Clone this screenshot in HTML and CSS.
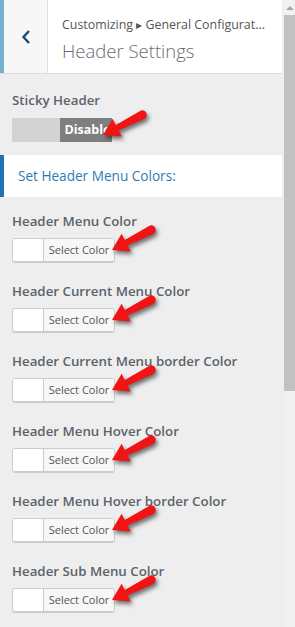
FILE: index.html
```html
<!DOCTYPE html>
<html lang="en">
<head>
    <meta charset="UTF-8">
    <title>Header Settings</title>
    <link rel="stylesheet" href="styles.css">
</head>
<body>
    <div class="panel">
        <div class="panel-head">
            <button class="back" aria-label="Back">
                <svg width="10" height="14" viewBox="0 0 10 14"><polyline points="8,1 2.5,7 8,13" fill="none" stroke="#0e4f7c" stroke-width="2.4"/></svg>
            </button>
            <div class="head-titles">
                <div class="crumb">Customizing &#9656; General Configurat...</div>
                <div class="head-title">Header Settings</div>
            </div>
        </div>

        <div class="control">
            <div class="control-title">Sticky Header</div>
            <div class="row">
                <div class="toggle">
                    <span class="toggle-off"></span>
                    <span class="toggle-on">Disable</span>
                </div>
                <svg class="arrow arrow-sticky" width="52" height="40" viewBox="0 0 52 40"><path d="M3,27 L12.6,10.8 L15.8,17 L40.1,2.9 A4.5,4.5 0 0 1 44.3,10.9 L18.6,22.4 L21.8,28.6 Z"/></svg>
            </div>
        </div>

        <div class="section-title">Set Header Menu Colors:</div>

        <div class="colors">
            <div class="control">
                <div class="control-title">Header Menu Color</div>
                <div class="row">
                    <div class="color-picker"><span class="swatch"></span><span class="select">Select Color</span></div>
                    <svg class="arrow" width="52" height="40" viewBox="0 0 52 40"><path d="M3,27 L12.6,10.8 L15.8,17 L40.1,2.9 A4.5,4.5 0 0 1 44.3,10.9 L18.6,22.4 L21.8,28.6 Z"/></svg>
                </div>
            </div>
            <div class="control">
                <div class="control-title">Header Current Menu Color</div>
                <div class="row">
                    <div class="color-picker"><span class="swatch"></span><span class="select">Select Color</span></div>
                    <svg class="arrow" width="52" height="40" viewBox="0 0 52 40"><path d="M3,27 L12.6,10.8 L15.8,17 L40.1,2.9 A4.5,4.5 0 0 1 44.3,10.9 L18.6,22.4 L21.8,28.6 Z"/></svg>
                </div>
            </div>
            <div class="control">
                <div class="control-title">Header Current Menu border Color</div>
                <div class="row">
                    <div class="color-picker"><span class="swatch"></span><span class="select">Select Color</span></div>
                    <svg class="arrow" width="52" height="40" viewBox="0 0 52 40"><path d="M3,27 L12.6,10.8 L15.8,17 L40.1,2.9 A4.5,4.5 0 0 1 44.3,10.9 L18.6,22.4 L21.8,28.6 Z"/></svg>
                </div>
            </div>
            <div class="control">
                <div class="control-title">Header Menu Hover Color</div>
                <div class="row">
                    <div class="color-picker"><span class="swatch"></span><span class="select">Select Color</span></div>
                    <svg class="arrow" width="52" height="40" viewBox="0 0 52 40"><path d="M3,27 L12.6,10.8 L15.8,17 L40.1,2.9 A4.5,4.5 0 0 1 44.3,10.9 L18.6,22.4 L21.8,28.6 Z"/></svg>
                </div>
            </div>
            <div class="control">
                <div class="control-title">Header Menu Hover border Color</div>
                <div class="row">
                    <div class="color-picker"><span class="swatch"></span><span class="select">Select Color</span></div>
                    <svg class="arrow" width="52" height="40" viewBox="0 0 52 40"><path d="M3,27 L12.6,10.8 L15.8,17 L40.1,2.9 A4.5,4.5 0 0 1 44.3,10.9 L18.6,22.4 L21.8,28.6 Z"/></svg>
                </div>
            </div>
            <div class="control">
                <div class="control-title">Header Sub Menu Color</div>
                <div class="row">
                    <div class="color-picker"><span class="swatch"></span><span class="select">Select Color</span></div>
                    <svg class="arrow" width="52" height="40" viewBox="0 0 52 40"><path d="M3,27 L12.6,10.8 L15.8,17 L40.1,2.9 A4.5,4.5 0 0 1 44.3,10.9 L18.6,22.4 L21.8,28.6 Z"/></svg>
                </div>
            </div>
        </div>
    </div>

    <div class="scrollbar">
        <div class="sb-up"><span class="sb-tri"></span></div>
        <div class="sb-thumb"></div>
    </div>
</body>
</html>
```

FILE: styles.css
```css
body {
    font-family: "Open Sans", "Noto Sans", Arial, sans-serif;
    background-color: #eeeeee;
    margin: 0;
    padding: 0;
    display: flex;
    height: 627px;
    overflow: hidden;
}

.panel {
    width: 282px;
    margin-right: 1px;
}

.panel-head {
    display: flex;
    height: 73px;
    background: white;
    border-bottom: 1px solid #dddddd;
}

.back {
    width: 48px;
    padding: 0;
    border: none;
    border-left: 4px solid #78afd1;
    border-right: 1px solid #dddddd;
    background-color: #f7f7f7;
    display: flex;
    align-items: center;
    justify-content: center;
}

.head-titles {
    padding: 15px 0 0 14px;
    min-width: 0;
    flex: 1;
}

.crumb {
    font-size: 12.4px;
    line-height: 20px;
    color: #555555;
    white-space: nowrap;
}

.head-title {
    font-size: 18.5px;
    font-weight: 300;
    line-height: 28px;
    color: #666d74;
    margin-top: 2px;
}

.control {
    padding: 16px 12px 0;
}

.colors .control {
    padding-top: 0;
    margin-bottom: 19px;
}

.colors {
    padding-top: 14px;
}

.control-title {
    font-size: 13.3px;
    font-weight: 600;
    line-height: 21px;
    color: #5b636b;
    margin-bottom: 6px;
}

.row {
    position: relative;
    display: flex;
}

.toggle {
    display: flex;
    width: 100px;
    height: 24px;
    margin-top: 1px;
    overflow: hidden;
}

.toggle-off {
    width: 50px;
    background-color: #d3d3d3;
}

.toggle-on {
    width: 50px;
    background-color: #7f7f7f;
    color: white;
    font-size: 12.5px;
    font-weight: 700;
    line-height: 24px;
    padding-left: 5px;
    white-space: nowrap;
}

.section-title {
    margin-top: 13px;
    background: white;
    border-left: 4px solid #2271b1;
    height: 42px;
    line-height: 42px;
    padding-left: 14px;
    font-size: 13.6px;
    color: #2e7bb4;
}

.color-picker {
    display: flex;
    width: 101px;
    height: 22px;
    border: 1px solid #cccccc;
    border-radius: 3px;
    box-shadow: 0 1px 0 #cccccc;
    overflow: hidden;
}

.swatch {
    width: 30px;
    background: white;
    border-right: 1px solid #cccccc;
}

.select {
    flex: 1;
    background-color: #f7f7f7;
    font-size: 11px;
    line-height: 22px;
    color: #555555;
    text-align: center;
}

.arrow {
    position: absolute;
    left: 97px;
    top: -15px;
    overflow: visible;
    filter: drop-shadow(2px 3px 2px rgba(0, 0, 0, 0.55));
}

    .arrow path {
        fill: #f01414;
    }

.arrow-sticky {
    left: 88px;
    top: -9px;
}

.scrollbar {
    width: 11px;
    margin-left: 1px;
    background-color: #f1f1f1;
    display: flex;
    flex-direction: column;
}

.sb-up {
    height: 15px;
    display: flex;
    justify-content: center;
    padding-top: 6px;
    box-sizing: border-box;
}

.sb-tri {
    width: 0;
    height: 0;
    border-left: 4px solid transparent;
    border-right: 4px solid transparent;
    border-bottom: 4px solid #a3a3a3;
}

.sb-thumb {
    height: 376px;
    background-color: #c1c1c1;
}
```
